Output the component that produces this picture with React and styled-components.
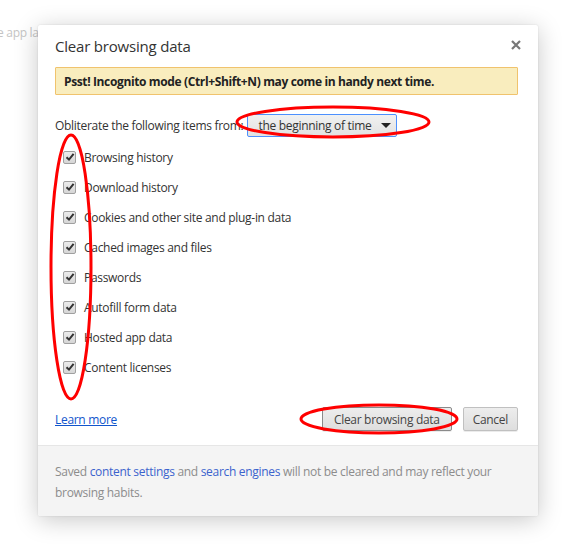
import React from 'react'
import styled, { createGlobalStyle } from 'styled-components'

const GlobalStyle = createGlobalStyle`
    html, body {
        margin: 0;
        padding: 0;
        background: #fff;
    }
    body {
        font-family: 'Open Sans', 'Noto Sans', 'Liberation Sans', sans-serif;
        font-size: 12px;
        letter-spacing: -0.3px;
        color: #333;
    }
`

const Page = styled.div`
    position: relative;
    width: 570px;
    height: 552px;
    overflow: hidden;
    background: #fff;
`

const BehindText = styled.div`
    padding: 24px 0 0 0;
    margin-left: -14px;
    font-size: 12px;
    color: #c4c4c4;
    white-space: nowrap;
`

const Dialog = styled.div`
    position: absolute;
    left: 38px;
    top: 25px;
    width: 500px;
    height: 491px;
    background: #fff;
    border-radius: 2px;
    box-shadow: 0 4px 24px rgba(0, 0, 0, 0.22), 0 0 2px rgba(0, 0, 0, 0.12);
    display: flex;
    flex-direction: column;
    overflow: hidden;
`

const Body = styled.div`
    flex: 1;
    padding: 0 20px 0 17px;
    display: flex;
    flex-direction: column;
`

const Header = styled.div`
    display: flex;
    justify-content: space-between;
    align-items: flex-start;
    padding-top: 11px;
`

const Title = styled.h1`
    margin: 0;
    font-size: 15px;
    font-weight: normal;
    letter-spacing: -0.2px;
    line-height: 20px;
    color: #333;
`

const Close = styled.div`
    margin: 4px -3px 0 0;
    width: 10px;
    height: 10px;
    display: flex;
`

const Banner = styled.div`
    margin-top: 11px;
    height: 26px;
    background: #f9edbe;
    border: 1px solid #f0c36d;
    border-radius: 1px;
    padding: 0 8px;
    display: flex;
    align-items: center;
    font-weight: bold;
    font-size: 12px;
    letter-spacing: -0.37px;
    color: #222;
`

const FromRow = styled.div`
    margin-top: 18px;
    display: flex;
    align-items: center;
    gap: 4px;
    height: 24px;
`

const Select = styled.div`
    width: 150px;
    height: 23px;
    box-sizing: border-box;
    border: 1px solid #4d90fe;
    border-radius: 2px;
    background: linear-gradient(#f1f1f1, #e2e2e2);
    display: flex;
    align-items: center;
    justify-content: space-between;
    padding: 0 5px 0 10px;
    color: #333;
`

const Arrow = styled.span`
    width: 0;
    height: 0;
    border-left: 5px solid transparent;
    border-right: 5px solid transparent;
    border-top: 5px solid #222;
`

const Items = styled.div`
    margin-top: 5px;
    display: flex;
    flex-direction: column;
`

const Item = styled.label`
    height: 30px;
    display: flex;
    align-items: center;
    gap: 8px;
    padding-left: 8px;
    color: #333;
`

const Box = styled.span`
    width: 13px;
    height: 13px;
    box-sizing: border-box;
    border: 1px solid #a0a0a0;
    border-radius: 2px;
    background: linear-gradient(#ececec, #d6d6d6);
    display: flex;
    align-items: center;
    justify-content: center;
`

const Actions = styled.div`
    margin-top: 25px;
    display: flex;
    align-items: center;
    gap: 11px;
`

const Link = styled.a`
    color: #15c;
    text-decoration: underline;
    margin-right: auto;
    cursor: pointer;
`

const Button = styled.button`
    height: 24px;
    padding: 0 ${(p) => (p.$wide ? 11 : 9)}px;
    font-family: inherit;
    font-size: 12px;
    letter-spacing: -0.3px;
    color: #444;
    border: 1px solid ${(p) => (p.$primary ? '#8a8a8a' : '#c0c0c0')};
    border-radius: 2px;
    background: linear-gradient(#ededed, #dedede);
    box-shadow: 0 1px 0 rgba(0, 0, 0, 0.08);
`

const Footer = styled.p`
    margin: 0;
    height: 71px;
    box-sizing: border-box;
    background: #f4f4f4;
    border-top: 1px solid #e6e6e6;
    padding: 15px 40px 0 17px;
    line-height: 21px;
    color: #8c8c8c;
`

const FooterLink = styled.a`
    color: #3b63cd;
    text-decoration: none;
`

const Marks = styled.svg`
    position: absolute;
    left: 0;
    top: 0;
    pointer-events: none;
`

const ITEMS = [
    'Browsing history',
    'Download history',
    'Cookies and other site and plug-in data',
    'Cached images and files',
    'Passwords',
    'Autofill form data',
    'Hosted app data',
    'Content licenses',
]

const Check = () => (
    <svg width="10" height="10" viewBox="0 0 10 10">
        <path d="M1.5 5.2 L4 7.6 L8.6 1.8" fill="none" stroke="#333" strokeWidth="2" />
    </svg>
)

const App = () => {
    return (
        <Page>
            <GlobalStyle />
            <BehindText>the app launcher</BehindText>
            <Dialog>
                <Body>
                    <Header>
                        <Title>Clear browsing data</Title>
                        <Close>
                            <svg width="10" height="10" viewBox="0 0 10 10">
                                <path d="M1 1 L9 9 M9 1 L1 9" stroke="#777" strokeWidth="2.2" />
                            </svg>
                        </Close>
                    </Header>
                    <Banner>Psst! Incognito mode (Ctrl+Shift+N) may come in handy next time.</Banner>
                    <FromRow>
                        <span>Obliterate the following items from:</span>
                        <Select>
                            <span>the beginning of time</span>
                            <Arrow />
                        </Select>
                    </FromRow>
                    <Items>
                        {ITEMS.map((label) => (
                            <Item key={label}>
                                <Box>
                                    <Check />
                                </Box>
                                {label}
                            </Item>
                        ))}
                    </Items>
                    <Actions>
                        <Link>Learn more</Link>
                        <Button $primary $wide>Clear browsing data</Button>
                        <Button>Cancel</Button>
                    </Actions>
                </Body>
                <Footer>
                    Saved <FooterLink>content settings</FooterLink> and{' '}
                    <FooterLink>search engines</FooterLink> will not be cleared and may reflect your
                    browsing habits.
                </Footer>
            </Dialog>
            <Marks width="570" height="552">
                <ellipse cx="333" cy="122" rx="96" ry="15" fill="none" stroke="#f00" strokeWidth="3" />
                <ellipse cx="71" cy="267" rx="20" ry="132" fill="none" stroke="#f00" strokeWidth="3" />
                <ellipse cx="379" cy="419" rx="78" ry="14" fill="none" stroke="#f00" strokeWidth="3" />
            </Marks>
        </Page>
    )
}

export default App
